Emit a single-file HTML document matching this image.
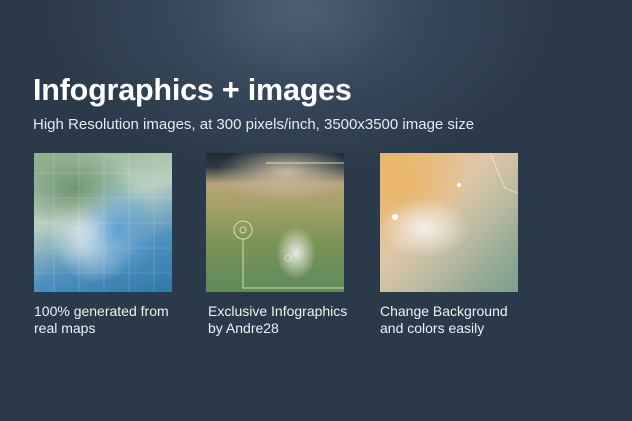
<!DOCTYPE html>
<html><head><style>
html,body{margin:0;padding:0}
body{width:632px;height:421px;overflow:hidden;position:relative;font-family:"Liberation Sans",sans-serif;color:#fff;
background:radial-gradient(ellipse 260px 170px at 300px 10px,#4d6072 0%,#37485a 45%,rgba(43,57,72,0) 100%),#2a3a4b;}
.t{position:absolute;left:33px;top:73px;font-size:30.5px;font-weight:bold;letter-spacing:-0.2px}
.s{position:absolute;left:33px;top:116px;font-size:15px;color:#e6ebef}
.im{position:absolute;top:153px;width:138px;height:139px;overflow:hidden}
.c{position:absolute;top:303px;font-size:14px;line-height:17px;color:#f0f2f4}
</style></head><body>
<div class="t">Infographics + images</div>
<div class="s">High Resolution images, at 300 pixels/inch, 3500x3500 image size</div>
<div class="im" style="left:34px;background:
radial-gradient(ellipse 40px 50px at 85px 75px,#5fa0d0,rgba(90,150,200,0) 100%),
radial-gradient(ellipse 60px 40px at 40px 35px,#6e9570,rgba(110,150,112,0) 100%),
radial-gradient(ellipse 45px 50px at 60px 80px,#e8eef2,rgba(230,238,242,0) 100%),
linear-gradient(160deg,#8fb08e 0%,#b9cfc0 40%,#4f90c0 70%,#2f78a8 100%);">
<svg width="138" height="139" style="position:absolute;left:0;top:0" opacity="0.25"><g stroke="#fff" stroke-width="0.6"><path d="M0 20H138M0 45H138M0 70H138M0 95H138M0 120H138M20 0V139M45 0V139M70 0V139M95 0V139M120 0V139"/></g></svg>
</div>
<div class="im" style="left:206px;background:
radial-gradient(ellipse 20px 26px at 90px 100px,#e8ece6,rgba(230,236,230,0) 100%),
radial-gradient(ellipse 70px 30px at 80px 20px,#c9b9a0,rgba(200,185,160,0) 100%),
linear-gradient(180deg,#1f2a33 0%,#2c3843 10%,#b9a27a 22%,#a2a066 40%,#7a9456 65%,#5f8a5c 100%);">
<svg width="138" height="139" style="position:absolute;left:0;top:0"><g fill="none" stroke="#e8f0d0" stroke-width="1" opacity="0.8"><circle cx="37" cy="77" r="9"/><circle cx="37" cy="77" r="3"/><path d="M37 86V135H138M60 10H138"/><circle cx="82" cy="105" r="3"/></g></svg>
</div>
<div class="im" style="left:380px;background:
radial-gradient(ellipse 45px 30px at 45px 75px,#f4eee8,rgba(244,238,232,0) 100%),
radial-gradient(ellipse 70px 60px at 20px 30px,#e9b56a,rgba(233,181,106,0) 100%),
linear-gradient(135deg,#e8b872 0%,#e0c7a6 40%,#b6b9a0 65%,#8fa890 85%,#7a9e96 100%);">
<svg width="138" height="139" style="position:absolute;left:0;top:0"><circle cx="15" cy="64" r="3" fill="#fff"/><circle cx="79" cy="32" r="2" fill="#fff"/><path d="M110 0L125 35L138 40" stroke="#fff" stroke-width="0.7" fill="none" opacity="0.7"/></svg>
</div>
<div class="c" style="left:34px">100% generated from<br>real maps</div>
<div class="c" style="left:208px">Exclusive Infographics<br>by Andre28</div>
<div class="c" style="left:380px">Change Background<br>and colors easily</div>
</body></html>
